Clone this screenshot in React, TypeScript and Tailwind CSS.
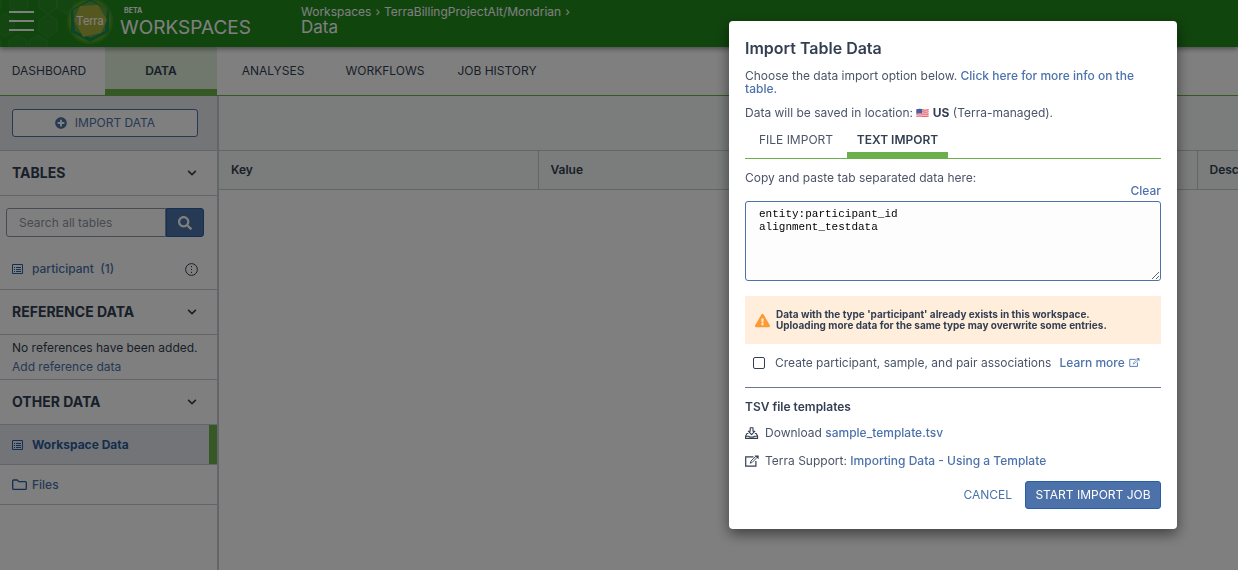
import React, { useState } from "react";
import {
  FaChevronDown,
  FaPlusCircle,
  FaSearch,
  FaExclamationTriangle,
} from "react-icons/fa";

const tabs = ["ANALYSES", "WORKFLOWS", "JOB HISTORY"];

function HexPattern() {
  const cells = [
    [-8, 3], [19, 3], [48, 3], [5, 26], [48, 26], [-8, 47], [18, 47], [38, 47], [66, 3],
  ];
  return (
    <svg className="absolute left-0 top-0 h-full w-[120px]" viewBox="0 0 120 47" fill="none" aria-hidden="true">
      {cells.map(([x, y]) => (
        <path
          key={`${x}-${y}`}
          transform={`translate(${x} ${y})`}
          d="M0-12 9-6V5L0 11-9 5V-6Z"
          fill="#fff"
          fillOpacity=".03"
          stroke="#fff"
          strokeOpacity=".07"
        />
      ))}
    </svg>
  );
}

function Logo() {
  return (
    <svg className="h-12 w-12 shrink-0" viewBox="0 0 48 48" role="img" aria-label="Terra">
      <defs>
        <radialGradient id="glow">
          <stop offset=".75" stopColor="#a9cc2c" stopOpacity=".6" />
          <stop offset="1" stopColor="#a9cc2c" stopOpacity="0" />
        </radialGradient>
      </defs>
      <circle cx="24" cy="21" r="24" fill="url(#glow)" />
      <path d="M24-1 43 10V32L24 42 5 32V10Z" fill="#1b8a50" />
      <path d="M24 1 41 9 39 31 25 38 9 31 7 10Z" fill="#5f9c40" />
      <path d="M14 6 32 5 41 20 35 33 17 37 8 20Z" fill="#a8b03c" />
      <text x="24" y="25" textAnchor="middle" fontSize="12" fill="#fff" fontFamily="Roboto, sans-serif">Terra</text>
    </svg>
  );
}

function ListIcon() {
  return (
    <svg className="h-3 w-3 shrink-0 text-[#265fa8]" viewBox="0 0 12 12" fill="none" stroke="currentColor" aria-hidden="true">
      <path d="M.5 1.5h10v9H.5Z" />
      <path d="M2 4.5h1M4 4.5h5M2 6.5h1M4 6.5h5M2 8.5h1M4 8.5h5" />
    </svg>
  );
}

function FolderIcon() {
  return (
    <svg className="h-3 w-4 shrink-0 text-[#265fa8]" viewBox="0 0 16 12" fill="none" stroke="currentColor" strokeWidth="1.3" strokeLinejoin="round" aria-hidden="true">
      <path d="M1.6 1h3.6l1.6 1.6h6.6q.9 0 .9.9v6q0 .9-.9.9H1.6q-.9 0-.9-.9V1.9Q.7 1 1.6 1Z" />
    </svg>
  );
}

function PopOutIcon({ className }: { className: string }) {
  return (
    <svg className={className} viewBox="0 0 14 12" fill="none" stroke="currentColor" strokeWidth="1.2" aria-hidden="true">
      <path d="M8.5 1.8H.7v9.4h10.2V6" />
      <path d="M5.2 8.2 6 6 11 1.2l1.2 1.2-5 5Z" strokeWidth=".9" />
      <path d="M9.7.4h3.9v3.8Z" fill="currentColor" stroke="none" />
    </svg>
  );
}

function DownloadIcon() {
  return (
    <svg className="h-3 w-[14px] shrink-0 text-[#333f52]" viewBox="0 0 14 12" fill="none" stroke="currentColor" strokeWidth="1.1" strokeLinejoin="round" aria-hidden="true">
      <path d="M3.3 6.5H2L.6 9v2.4h12V9l-1.4-2.5H9.9M.8 9.2h3l1 .8h3.6l1-.8h3" />
      <path d="M5.2.7h2.8v3.5h1.9L6.6 7.7 3.3 4.2h1.9Z" />
    </svg>
  );
}

function Flag() {
  return (
    <svg className="inline h-[10px] w-[13px] align-[-1px]" viewBox="0 0 13 11" preserveAspectRatio="none" role="img" aria-label="United States flag">
      <path d="M.4 1.6Q3 .3 6.5 1.3T12.6 1v8.4q-3 1-6.1.3T.4 10Z" fill="#f3c9cc" />
      <path d="M.4 2.2Q3 1 6.5 2T12.6 1.6M.4 4.4Q3 3.3 6.5 4.2T12.6 4M.4 6.8Q3 5.7 6.5 6.6T12.6 6.4M.4 9.2Q3 8.3 6.5 9T12.6 8.8" fill="none" stroke="#e0606a" strokeWidth="1.1" />
      <path d="M.4 1.6Q3 .5 6 1.2v4.7Q3 5.2.4 6.2Z" fill="#3f62a6" />
    </svg>
  );
}

function SectionHeader({ title }: { title: string }) {
  return (
    <button type="button" className="flex h-[45px] w-full items-center justify-between border-b border-[#c8cbd0] px-3 text-left text-sm leading-4 font-bold">
      {title}
      <FaChevronDown className="mr-2 h-2.5 w-2.5" />
    </button>
  );
}

function Header() {
  return (
    <header className="relative z-10 flex h-[47px] items-start bg-[#228a1c] text-white shadow-[0_2px_5px_rgba(0,0,0,0.4)]">
      <HexPattern />
      <button type="button" aria-label="Menu" className="relative ml-[9px] mt-[11px] flex w-[25px] shrink-0 flex-col gap-[7px]">
        <span className="h-0.5 bg-white" />
        <span className="h-0.5 bg-white" />
        <span className="h-0.5 bg-white" />
      </button>
      <a href="#home" className="relative ml-8 flex h-[47px] w-[235px] shrink-0 gap-1.5 overflow-hidden">
        <Logo />
        <span className="flex flex-col pt-1.5">
          <span className="pl-1 text-[7px] leading-[9px] font-bold">BETA</span>
          <span className="text-[19px] leading-[26px]">WORKSPACES</span>
        </span>
      </a>
      <nav className="flex flex-col pt-1" aria-label="Breadcrumb">
        <div className="flex items-center gap-1 text-xs leading-[15px]">
          <a href="#workspaces">Workspaces</a>
          <span>›</span>
          <a href="#project">TerraBillingProjectAlt/Mondrian</a>
          <span>›</span>
        </div>
        <span className="text-[17px] leading-4">Data</span>
      </nav>
    </header>
  );
}

function Sidebar() {
  return (
    <aside className="w-[219px] shrink-0 border-r-2 border-[#c8cbd0]">
      <div className="border-b border-[#c8cbd0] bg-[#e6eaee] py-[13px] pr-[19px] pl-3">
        <button type="button" className="flex h-7 w-full items-center justify-center gap-2 rounded-[3px] border border-[#4d72aa] bg-white text-xs text-[#4d72aa]">
          <FaPlusCircle className="h-3 w-3" />
          IMPORT DATA
        </button>
      </div>
      <SectionHeader title="TABLES" />
      <div className="border-b border-[#c8cbd0]">
        <div className="flex h-[41px] pt-3 pr-[13px] pl-1.5">
          <input aria-label="Search all tables" placeholder="Search all tables" className="h-[29px] min-w-0 flex-1 rounded-l-[3px] border border-[#8f96a3] bg-white px-3 text-xs placeholder:text-[#8f96a3]" />
          <button type="button" aria-label="Search" className="flex h-[29px] w-[38px] items-center justify-center rounded-r-[3px] border border-[#265fa8] bg-[#4d72aa] text-white">
            <FaSearch className="h-3.5 w-3.5" />
          </button>
        </div>
        <div className="flex h-[52px] items-center pt-3 pr-[19px] pl-3 text-[#4d72aa]">
          <ListIcon />
          <a href="#participant" className="ml-2 flex-1 text-xs font-medium">participant&nbsp; (1)</a>
          <button type="button" aria-label="Table options" className="text-[#333f52]">
            <svg className="h-[13px] w-[13px]" viewBox="0 0 13 13" aria-hidden="true">
              <circle cx="6.5" cy="6.5" r="5.9" fill="none" stroke="currentColor" />
              <path d="M6 3h1v1.2H6ZM6 5.9h1v1.2H6ZM6 8.8h1v1.2H6Z" fill="currentColor" />
            </svg>
          </button>
        </div>
      </div>
      <SectionHeader title="REFERENCE DATA" />
      <div className="h-[45px] border-b border-[#c8cbd0] px-3 pt-[3px] text-xs leading-[19px] whitespace-nowrap">
        <p>No references have been added.</p>
        <a href="#reference" className="text-[#4d72aa]">Add reference data</a>
      </div>
      <SectionHeader title="OTHER DATA" />
      <a href="#workspace-data" className="flex h-10 items-center gap-2 border-b border-[#c8cbd0] bg-[#e4e9ee] pl-3 text-xs font-bold text-[#2c5d9c]">
        <ListIcon />
        <span className="flex-1">Workspace Data</span>
        <span className="h-full w-2 bg-[#6bb04b]" />
      </a>
      <a href="#files" className="flex h-10 items-center gap-1 border-b border-[#c8cbd0] pl-3 text-xs font-medium text-[#4d72aa]">
        <FolderIcon />
        Files
      </a>
    </aside>
  );
}

function ImportDialog() {
  const [text, setText] = useState("entity:participant_id\nalignment_testdata");
  return (
    <div className="fixed inset-0 z-20 flex items-start justify-end bg-black/50 pt-[21px] pr-[61px]">
      <section role="dialog" aria-modal="true" aria-labelledby="dialog-title" className="w-[448px] rounded-[4px] bg-white px-4 pt-[18px] pb-5 text-[#4a5568] shadow-[0_5px_14px_rgba(0,0,0,0.5)]">
        <h1 id="dialog-title" className="text-base leading-[18px] font-semibold text-[#333f52]">Import Table Data</h1>
        <p className="mt-3 leading-[13px]">
          Choose the data import option below.{" "}
          <a href="#info" className="font-medium text-[#4d72aa]">Click here for more info on the table.</a>
        </p>
        <p className="mt-[11px] leading-[13px]">
          Data will be saved in location: <Flag /> <strong className="text-[#333f52]">US</strong> (Terra-managed).
        </p>
        <div role="tablist" className="mt-1.5 flex h-[34px] border-b border-[#6bb04b]">
          <button type="button" role="tab" aria-selected="false" className="w-[102px] border-b-[6px] border-transparent pt-0.5">FILE IMPORT</button>
          <button type="button" role="tab" aria-selected="true" className="w-[101px] border-b-[6px] border-[#6bb04b] pt-0.5 font-semibold text-[#333f52]">TEXT IMPORT</button>
        </div>
        <label htmlFor="tsv" className="mt-3 block leading-[13px]">Copy and paste tab separated data here:</label>
        <button type="button" className="ml-auto block leading-[13px] font-medium text-[#4d72aa]" onClick={() => setText("")}>Clear</button>
        <textarea
          id="tsv"
          value={text}
          onChange={(e) => setText(e.target.value)}
          className="mt-1 block h-20 w-full rounded-[3px] border border-[#4d72aa] bg-[#fdfdfd] px-[13px] py-1.5 font-['Liberation_Mono',monospace] text-[11px] leading-[13px] text-black outline-none"
        />
        <div className="mt-[15px] flex h-12 items-center gap-1.5 bg-[#ffeedb] px-2.5 text-[10px] leading-[11px] font-bold text-[#333f52]">
          <FaExclamationTriangle className="h-[15px] w-[15px] shrink-0 text-[#ff9933]" />
          <p>
            Data with the type 'participant' already exists in this workspace.
            <br />
            Uploading more data for the same type may overwrite some entries.
          </p>
        </div>
        <div className="mt-3 flex items-center pl-2 leading-[13px]">
          <input id="assoc" type="checkbox" className="h-3 w-3 appearance-none rounded-[2px] border border-[#333f52]" />
          <label htmlFor="assoc" className="ml-2.5">Create participant, sample, and pair associations</label>
          <a href="#learn" className="ml-2 flex items-center gap-1 font-medium text-[#4d72aa]">
            Learn more
            <PopOutIcon className="h-[9px] w-[11px]" />
          </a>
        </div>
        <hr className="mt-[18px] border-[#6b7688]" />
        <h2 className="mt-[11px] leading-4 font-semibold text-[#333f52]">TSV file templates</h2>
        <p className="mt-[11px] flex items-center gap-1.5 leading-[14px]">
          <DownloadIcon />
          <span>Download <a href="#template" className="font-medium text-[#4d72aa]">sample_template.tsv</a></span>
        </p>
        <p className="mt-3.5 flex items-center gap-1.5 leading-[14px]">
          <PopOutIcon className="h-3 w-[14px] shrink-0 text-[#333f52]" />
          <span>Terra Support: <a href="#support" className="font-medium text-[#4d72aa]">Importing Data - Using a Template</a></span>
        </p>
        <div className="mt-[13px] flex items-center justify-end gap-[13px]">
          <button type="button" className="text-[#4d72aa]">CANCEL</button>
          <button type="button" className="h-7 w-[136px] rounded-[3px] border border-[#265fa8] bg-[#4d72aa] text-white">START IMPORT JOB</button>
        </div>
      </section>
    </div>
  );
}

export default function App() {
  return (
    <div className="flex min-h-screen flex-col overflow-hidden bg-white font-['Inter',sans-serif] text-xs text-[#333f52]">
      <Header />
      <nav className="flex h-[49px] border-b border-[#6bb04b]">
        <a href="#dashboard" className="flex w-[105px] items-center justify-center pr-[7px]">DASHBOARD</a>
        <a href="#data" aria-current="page" className="flex w-28 items-center justify-center border-b-[6px] border-[#6bb04b] bg-[#e1efdb] pt-1.5 font-semibold">DATA</a>
        {tabs.map((t) => (
          <a key={t} href="#tab" className="flex w-28 items-center justify-center">{t}</a>
        ))}
      </nav>
      <div className="flex flex-1">
        <Sidebar />
        <main className="min-w-0 flex-1 overflow-hidden">
          <div className="h-[54px] bg-[#f6f9f8]" />
          <table className="w-[1100px] table-fixed border-collapse text-left">
            <thead>
              <tr className="h-[39px] border-y border-[#c8cbd0] bg-[#f6f9f8]">
                <th scope="col" className="w-[319px] border-r border-[#c8cbd0] px-3 font-semibold">Key</th>
                <th scope="col" className="w-[659px] border-r border-[#c8cbd0] px-3 font-semibold">Value</th>
                <th scope="col" className="px-3 font-semibold">Description</th>
              </tr>
            </thead>
          </table>
        </main>
      </div>
      <ImportDialog />
    </div>
  );
}
